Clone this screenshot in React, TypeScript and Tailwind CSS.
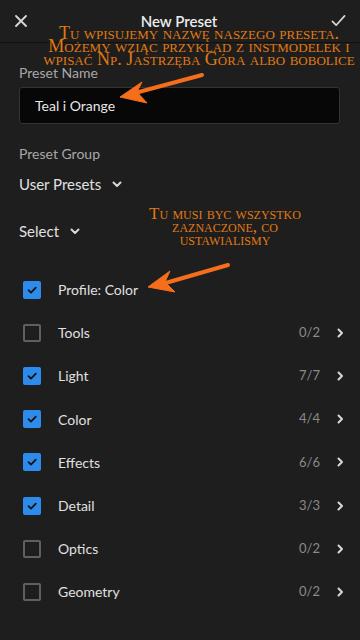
const rows = [
  { label: "Profile: Color", on: true, count: "" },
  { label: "Tools", on: false, count: "0/2" },
  { label: "Light", on: true, count: "7/7" },
  { label: "Color", on: true, count: "4/4" },
  { label: "Effects", on: true, count: "6/6" },
  { label: "Detail", on: true, count: "3/3" },
  { label: "Optics", on: false, count: "0/2" },
  { label: "Geometry", on: false, count: "0/2" },
];

const Chevron = ({ down }: { down?: boolean }) => (
  <svg width="12" height="12" viewBox="0 0 12 12" className={down ? "" : "-rotate-90"}>
    <path d="M2.5 4.5 L6 8 L9.5 4.5" fill="none" stroke="#d8d8d8" strokeWidth="2" strokeLinecap="round" strokeLinejoin="round" />
  </svg>
);

const Box = ({ on }: { on: boolean }) =>
  on ? (
    <div className="w-[18px] h-[18px] rounded-[2px] bg-[#2d8ceb] flex items-center justify-center">
      <svg width="12" height="12" viewBox="0 0 12 12">
        <path d="M2.5 6.2 L5 8.6 L9.8 3.6" fill="none" stroke="#111" strokeWidth="1.8" strokeLinecap="round" strokeLinejoin="round" />
      </svg>
    </div>
  ) : (
    <div className="w-[18px] h-[18px] rounded-[2px] border-2 border-[#606060]" />
  );

export default function App() {
  return (
    <div className="relative w-[360px] h-[640px] overflow-hidden bg-[#1e1e1e] text-[#e0e0e0] font-['Lato',sans-serif]">
      <div className="h-[43px] flex items-center justify-between pl-[15px] pr-[14px] border-b border-[#111]">
        <svg width="12" height="12" viewBox="0 0 12 12">
          <path d="M1 1 L11 11 M11 1 L1 11" stroke="#d8d8d8" strokeWidth="1.8" strokeLinecap="round" />
        </svg>
        <div className="text-[15px] font-semibold text-[#ececec]">New Preset</div>
        <svg width="15" height="14" viewBox="0 0 16 14">
          <path d="M1.5 7.5 L5.5 11.5 L14.5 1.5" fill="none" stroke="#d8d8d8" strokeWidth="1.8" strokeLinecap="round" strokeLinejoin="round" />
        </svg>
      </div>

      <div className="pl-[19px] pr-[20px]">
        <div className="mt-[20px] h-[20px] leading-[20px] text-[14px] text-[#a8a8a8]">Preset Name</div>
        <div className="mt-[4px] h-[37px] rounded-[3px] bg-[#070707] border border-[#333] flex items-center px-[15px] text-[14px] text-[#e6e6e6]">
          Teal i Orange
        </div>

        <div className="mt-[20px] h-[20px] leading-[20px] text-[14px] text-[#a8a8a8]">Preset Group</div>
        <div className="mt-[10px] h-[20px] flex items-center gap-[10px] text-[15px]">
          <span>User Presets</span>
          <Chevron down />
        </div>
        <div className="mt-[27px] h-[20px] flex items-center gap-[10px] text-[15px]">
          <span>Select</span>
          <Chevron down />
        </div>

        <div className="mt-[27px] -mr-[6px] flex flex-col">
          {rows.map((r) => (
            <div key={r.label} className="h-[43.2px] flex items-center pl-[4px]">
              <Box on={r.on} />
              <span className="ml-[17px] flex-1 text-[14px]">{r.label}</span>
              {r.count && (
                <>
                  <span className="text-[13px] text-[#8a8a8a]">{r.count}</span>
                  <span className="ml-[14px]">
                    <Chevron />
                  </span>
                </>
              )}
            </div>
          ))}
        </div>
      </div>

      <div className="absolute left-[19px] top-[27px] w-[360px] text-center text-[18px] leading-[13px] text-[#e07a12] font-['Liberation_Serif',serif] [font-variant-caps:small-caps] whitespace-nowrap pointer-events-none">
        Tu wpisujemy nazwę naszego preseta.
        <br />
        Możemy wziąc przyklad z instmodelek i
        <br />
        wpisać Np. Jastrzęba Góra albo bobolice
      </div>

      <div className="absolute left-[125px] top-[207px] w-[200px] text-center text-[17px] leading-[13px] text-[#e07a12] font-['Liberation_Serif',serif] [font-variant-caps:small-caps] whitespace-nowrap pointer-events-none">
        Tu musi byc wszystko
        <br />
        zaznaczone, co
        <br />
        ustawialismy
      </div>

      <svg className="absolute inset-0 pointer-events-none" width="360" height="640" viewBox="0 0 360 640">
        <g fill="#f46e1c" stroke="#f46e1c" strokeLinejoin="round">
          <line x1="202" y1="75" x2="135" y2="93" strokeWidth="4" strokeLinecap="round" />
          <path d="M120 97 L142 82 L137 92 L147 103 Z" strokeWidth="1" />
          <line x1="228" y1="265" x2="162" y2="284" strokeWidth="4" strokeLinecap="round" />
          <path d="M148 287 L170 271 L165 282 L175 292 Z" strokeWidth="1" />
        </g>
      </svg>
    </div>
  );
}
